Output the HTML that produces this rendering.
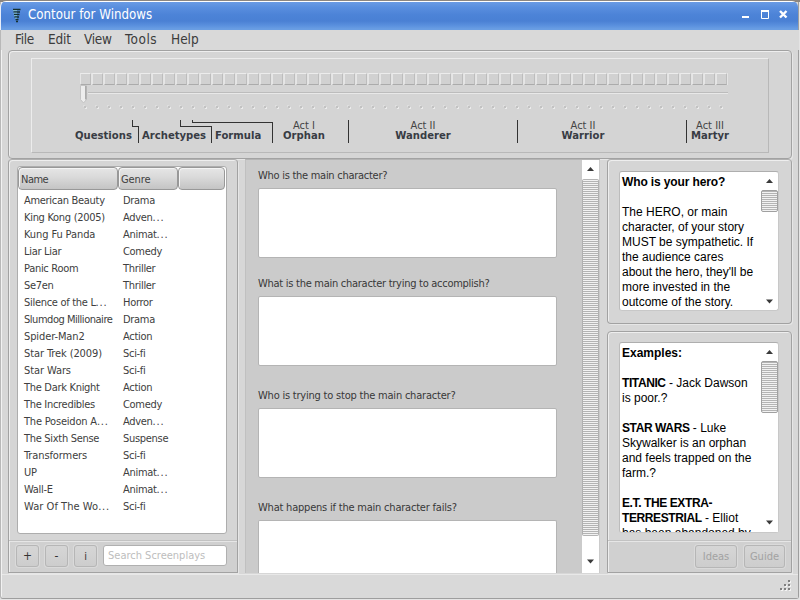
<!DOCTYPE html>
<html><head><meta charset="utf-8"><title>Contour for Windows</title>
<style>
*{box-sizing:border-box;margin:0;padding:0}
html,body{width:800px;height:600px;overflow:hidden;background:#d6d6d6}
body{position:relative;font-family:"DejaVu Sans Condensed","DejaVu Sans","Liberation Sans",sans-serif;font-size:11px;color:#3a3a3a}
div,span{position:absolute;white-space:nowrap}
#win{left:0;top:0;width:800px;height:600px;background:#e4e4e4}#win2{left:0;top:2px;width:799px;height:597px;background:#d7d7d7;border:1px solid #9e9e9e;border-left-color:#b8b8b8;border-top:none;border-radius:0 0 3px 3px;box-shadow:inset 1px 0 0 #f2f2f2}
#topline{left:0;top:0;width:800px;height:2px;background:#8c8680}
#title{left:0;top:1px;width:798px;height:29px;background:linear-gradient(#ffffff 0,#ffffff 1px,#6a9be4 1px,#5a8fdf 6px,#4c83d7 14px,#4a80d4 20px,#5c92df 25px,#6a9ee3 28px);border-radius:6px 6px 0 0;border-left:1px solid #e8eefa}
#title .t{left:27px;top:6px;font-size:13.2px;color:#fff;font-family:"DejaVu Sans Condensed","DejaVu Sans",sans-serif}
#menu{left:1px;top:30px;width:798px;height:20px;background:#d9d9d9}
#menu span{top:1px;font-size:13.5px;color:#3c3c3c;font-family:"DejaVu Sans Condensed","DejaVu Sans",sans-serif}
.gb{border:1px solid #a2a2a2;border-radius:4px;background:#d5d5d5;box-shadow:inset 1px 1px 0 #eeeeee,1px 1px 0 #e6e6e6}.gb.lo{border-top-color:#b0b0b0}
.lbl{font-size:11px;color:#3a3a3a}
.ta{background:#fff;border:1px solid #b4b4b4;border-radius:2px}
.q{left:258px;font-size:11px;color:#383838;letter-spacing:-0.27px}
.row span{font-size:11px;color:#404040;letter-spacing:-0.3px}.row u{text-decoration:none;letter-spacing:0.8px}
.btn{border:1px solid #b6b6b6;border-radius:3px;background:linear-gradient(#d6d6d6,#cdcdcd);text-align:center;color:#333;box-shadow:0 0 0 1px #dadada}
.hd{top:167px;height:23px;border:1px solid #989898;border-radius:4px;background:linear-gradient(#e6e6e6 0,#d9d9d9 45%,#c4c4c4 100%);box-shadow:inset 1px 1px 0 #f4f4f4}
.hd span{left:2px;top:5px;font-size:11px;color:#404040;letter-spacing:-0.5px}
.ar{font-family:"Liberation Sans",sans-serif;font-size:12px;color:#000;line-height:15px;white-space:normal}
.ar b{font-weight:bold}.ar b.u{letter-spacing:-0.4px}
.sb{background:repeating-linear-gradient(#b4b4b4 0,#b4b4b4 1px,#f2f2f2 1px,#f2f2f2 2px)}
</style></head><body>
<div id="win"></div><div id="win2"></div>
<div id="topline"></div>
<div id="title"><span class="t">Contour for Windows</span></div>
<svg style="position:absolute;left:12px;top:8px" width="10" height="15" viewBox="0 0 10 15"><path d="M1 1.500h7.500M1.500 4h6.500M2 6.500h5.500M2.500 9h4.500M3.500 11.500h3M4 13.500h2" stroke="#16302e" stroke-width="1.700" fill="none"/><path d="M1 2.600h4M1.500 5.100h3.500M2 7.600h3M3 10.100h2" stroke="#8fd0d4" stroke-width="0.800" fill="none"/></svg>
<svg style="position:absolute;left:740px;top:8px" width="50" height="12" viewBox="0 0 50 12"><g stroke="#fff" fill="none"><path d="M2 9h7" stroke-width="2"/><path d="M21.5 3v7.5h7v-7.5M21 3h8" stroke-width="1"/><path d="M21 3h8" stroke-width="2"/><path d="M40 3l6.5 6.5M46.500 3l-6.500 6.500" stroke-width="2.4"/></g></svg>
<div id="menu"><span style="left:14px;letter-spacing:-0.3px">File</span><span style="left:47px;letter-spacing:-0.2px">Edit</span><span style="left:83px;letter-spacing:-0.3px">View</span><span style="left:124px;letter-spacing:0.5px">Tools</span><span style="left:170px">Help</span></div>
<div class="gb" style="left:8px;top:50px;width:784px;height:109px"></div>
<div style="left:31px;top:58px;width:738px;height:95px;background:#d4d4d4;border:1px solid #ececec;border-right-color:#b8b8b8;border-bottom-color:#b8b8b8"></div>
<div style="left:80px;top:73px;width:648px;height:12px;background:#e4e4e4"><i style="position:absolute;left:0px;top:0;width:11px;height:12px;background:#d1d1d1;border-top:1px solid #ececec;border-left:1px solid #e6e6e6;border-bottom:1px solid #ababab;border-right:1px solid #bdbdbd"></i><i style="position:absolute;left:12px;top:0;width:11px;height:12px;background:#d1d1d1;border-top:1px solid #ececec;border-left:1px solid #e6e6e6;border-bottom:1px solid #ababab;border-right:1px solid #bdbdbd"></i><i style="position:absolute;left:24px;top:0;width:11px;height:12px;background:#d1d1d1;border-top:1px solid #ececec;border-left:1px solid #e6e6e6;border-bottom:1px solid #ababab;border-right:1px solid #bdbdbd"></i><i style="position:absolute;left:36px;top:0;width:11px;height:12px;background:#d1d1d1;border-top:1px solid #ececec;border-left:1px solid #e6e6e6;border-bottom:1px solid #ababab;border-right:1px solid #bdbdbd"></i><i style="position:absolute;left:48px;top:0;width:11px;height:12px;background:#d1d1d1;border-top:1px solid #ececec;border-left:1px solid #e6e6e6;border-bottom:1px solid #ababab;border-right:1px solid #bdbdbd"></i><i style="position:absolute;left:60px;top:0;width:11px;height:12px;background:#d1d1d1;border-top:1px solid #ececec;border-left:1px solid #e6e6e6;border-bottom:1px solid #ababab;border-right:1px solid #bdbdbd"></i><i style="position:absolute;left:72px;top:0;width:11px;height:12px;background:#d1d1d1;border-top:1px solid #ececec;border-left:1px solid #e6e6e6;border-bottom:1px solid #ababab;border-right:1px solid #bdbdbd"></i><i style="position:absolute;left:84px;top:0;width:11px;height:12px;background:#d1d1d1;border-top:1px solid #ececec;border-left:1px solid #e6e6e6;border-bottom:1px solid #ababab;border-right:1px solid #bdbdbd"></i><i style="position:absolute;left:96px;top:0;width:11px;height:12px;background:#d1d1d1;border-top:1px solid #ececec;border-left:1px solid #e6e6e6;border-bottom:1px solid #ababab;border-right:1px solid #bdbdbd"></i><i style="position:absolute;left:108px;top:0;width:11px;height:12px;background:#d1d1d1;border-top:1px solid #ececec;border-left:1px solid #e6e6e6;border-bottom:1px solid #ababab;border-right:1px solid #bdbdbd"></i><i style="position:absolute;left:120px;top:0;width:11px;height:12px;background:#d1d1d1;border-top:1px solid #ececec;border-left:1px solid #e6e6e6;border-bottom:1px solid #ababab;border-right:1px solid #bdbdbd"></i><i style="position:absolute;left:132px;top:0;width:11px;height:12px;background:#d1d1d1;border-top:1px solid #ececec;border-left:1px solid #e6e6e6;border-bottom:1px solid #ababab;border-right:1px solid #bdbdbd"></i><i style="position:absolute;left:144px;top:0;width:11px;height:12px;background:#d1d1d1;border-top:1px solid #ececec;border-left:1px solid #e6e6e6;border-bottom:1px solid #ababab;border-right:1px solid #bdbdbd"></i><i style="position:absolute;left:156px;top:0;width:11px;height:12px;background:#d1d1d1;border-top:1px solid #ececec;border-left:1px solid #e6e6e6;border-bottom:1px solid #ababab;border-right:1px solid #bdbdbd"></i><i style="position:absolute;left:168px;top:0;width:11px;height:12px;background:#d1d1d1;border-top:1px solid #ececec;border-left:1px solid #e6e6e6;border-bottom:1px solid #ababab;border-right:1px solid #bdbdbd"></i><i style="position:absolute;left:180px;top:0;width:11px;height:12px;background:#d1d1d1;border-top:1px solid #ececec;border-left:1px solid #e6e6e6;border-bottom:1px solid #ababab;border-right:1px solid #bdbdbd"></i><i style="position:absolute;left:192px;top:0;width:11px;height:12px;background:#d1d1d1;border-top:1px solid #ececec;border-left:1px solid #e6e6e6;border-bottom:1px solid #ababab;border-right:1px solid #bdbdbd"></i><i style="position:absolute;left:204px;top:0;width:11px;height:12px;background:#d1d1d1;border-top:1px solid #ececec;border-left:1px solid #e6e6e6;border-bottom:1px solid #ababab;border-right:1px solid #bdbdbd"></i><i style="position:absolute;left:216px;top:0;width:11px;height:12px;background:#d1d1d1;border-top:1px solid #ececec;border-left:1px solid #e6e6e6;border-bottom:1px solid #ababab;border-right:1px solid #bdbdbd"></i><i style="position:absolute;left:228px;top:0;width:11px;height:12px;background:#d1d1d1;border-top:1px solid #ececec;border-left:1px solid #e6e6e6;border-bottom:1px solid #ababab;border-right:1px solid #bdbdbd"></i><i style="position:absolute;left:240px;top:0;width:11px;height:12px;background:#d1d1d1;border-top:1px solid #ececec;border-left:1px solid #e6e6e6;border-bottom:1px solid #ababab;border-right:1px solid #bdbdbd"></i><i style="position:absolute;left:252px;top:0;width:11px;height:12px;background:#d1d1d1;border-top:1px solid #ececec;border-left:1px solid #e6e6e6;border-bottom:1px solid #ababab;border-right:1px solid #bdbdbd"></i><i style="position:absolute;left:264px;top:0;width:11px;height:12px;background:#d1d1d1;border-top:1px solid #ececec;border-left:1px solid #e6e6e6;border-bottom:1px solid #ababab;border-right:1px solid #bdbdbd"></i><i style="position:absolute;left:276px;top:0;width:11px;height:12px;background:#d1d1d1;border-top:1px solid #ececec;border-left:1px solid #e6e6e6;border-bottom:1px solid #ababab;border-right:1px solid #bdbdbd"></i><i style="position:absolute;left:288px;top:0;width:11px;height:12px;background:#d1d1d1;border-top:1px solid #ececec;border-left:1px solid #e6e6e6;border-bottom:1px solid #ababab;border-right:1px solid #bdbdbd"></i><i style="position:absolute;left:300px;top:0;width:11px;height:12px;background:#d1d1d1;border-top:1px solid #ececec;border-left:1px solid #e6e6e6;border-bottom:1px solid #ababab;border-right:1px solid #bdbdbd"></i><i style="position:absolute;left:312px;top:0;width:11px;height:12px;background:#d1d1d1;border-top:1px solid #ececec;border-left:1px solid #e6e6e6;border-bottom:1px solid #ababab;border-right:1px solid #bdbdbd"></i><i style="position:absolute;left:324px;top:0;width:11px;height:12px;background:#d1d1d1;border-top:1px solid #ececec;border-left:1px solid #e6e6e6;border-bottom:1px solid #ababab;border-right:1px solid #bdbdbd"></i><i style="position:absolute;left:336px;top:0;width:11px;height:12px;background:#d1d1d1;border-top:1px solid #ececec;border-left:1px solid #e6e6e6;border-bottom:1px solid #ababab;border-right:1px solid #bdbdbd"></i><i style="position:absolute;left:348px;top:0;width:11px;height:12px;background:#d1d1d1;border-top:1px solid #ececec;border-left:1px solid #e6e6e6;border-bottom:1px solid #ababab;border-right:1px solid #bdbdbd"></i><i style="position:absolute;left:360px;top:0;width:11px;height:12px;background:#d1d1d1;border-top:1px solid #ececec;border-left:1px solid #e6e6e6;border-bottom:1px solid #ababab;border-right:1px solid #bdbdbd"></i><i style="position:absolute;left:372px;top:0;width:11px;height:12px;background:#d1d1d1;border-top:1px solid #ececec;border-left:1px solid #e6e6e6;border-bottom:1px solid #ababab;border-right:1px solid #bdbdbd"></i><i style="position:absolute;left:384px;top:0;width:11px;height:12px;background:#d1d1d1;border-top:1px solid #ececec;border-left:1px solid #e6e6e6;border-bottom:1px solid #ababab;border-right:1px solid #bdbdbd"></i><i style="position:absolute;left:396px;top:0;width:11px;height:12px;background:#d1d1d1;border-top:1px solid #ececec;border-left:1px solid #e6e6e6;border-bottom:1px solid #ababab;border-right:1px solid #bdbdbd"></i><i style="position:absolute;left:408px;top:0;width:11px;height:12px;background:#d1d1d1;border-top:1px solid #ececec;border-left:1px solid #e6e6e6;border-bottom:1px solid #ababab;border-right:1px solid #bdbdbd"></i><i style="position:absolute;left:420px;top:0;width:11px;height:12px;background:#d1d1d1;border-top:1px solid #ececec;border-left:1px solid #e6e6e6;border-bottom:1px solid #ababab;border-right:1px solid #bdbdbd"></i><i style="position:absolute;left:432px;top:0;width:11px;height:12px;background:#d1d1d1;border-top:1px solid #ececec;border-left:1px solid #e6e6e6;border-bottom:1px solid #ababab;border-right:1px solid #bdbdbd"></i><i style="position:absolute;left:444px;top:0;width:11px;height:12px;background:#d1d1d1;border-top:1px solid #ececec;border-left:1px solid #e6e6e6;border-bottom:1px solid #ababab;border-right:1px solid #bdbdbd"></i><i style="position:absolute;left:456px;top:0;width:11px;height:12px;background:#d1d1d1;border-top:1px solid #ececec;border-left:1px solid #e6e6e6;border-bottom:1px solid #ababab;border-right:1px solid #bdbdbd"></i><i style="position:absolute;left:468px;top:0;width:11px;height:12px;background:#d1d1d1;border-top:1px solid #ececec;border-left:1px solid #e6e6e6;border-bottom:1px solid #ababab;border-right:1px solid #bdbdbd"></i><i style="position:absolute;left:480px;top:0;width:11px;height:12px;background:#d1d1d1;border-top:1px solid #ececec;border-left:1px solid #e6e6e6;border-bottom:1px solid #ababab;border-right:1px solid #bdbdbd"></i><i style="position:absolute;left:492px;top:0;width:11px;height:12px;background:#d1d1d1;border-top:1px solid #ececec;border-left:1px solid #e6e6e6;border-bottom:1px solid #ababab;border-right:1px solid #bdbdbd"></i><i style="position:absolute;left:504px;top:0;width:11px;height:12px;background:#d1d1d1;border-top:1px solid #ececec;border-left:1px solid #e6e6e6;border-bottom:1px solid #ababab;border-right:1px solid #bdbdbd"></i><i style="position:absolute;left:516px;top:0;width:11px;height:12px;background:#d1d1d1;border-top:1px solid #ececec;border-left:1px solid #e6e6e6;border-bottom:1px solid #ababab;border-right:1px solid #bdbdbd"></i><i style="position:absolute;left:528px;top:0;width:11px;height:12px;background:#d1d1d1;border-top:1px solid #ececec;border-left:1px solid #e6e6e6;border-bottom:1px solid #ababab;border-right:1px solid #bdbdbd"></i><i style="position:absolute;left:540px;top:0;width:11px;height:12px;background:#d1d1d1;border-top:1px solid #ececec;border-left:1px solid #e6e6e6;border-bottom:1px solid #ababab;border-right:1px solid #bdbdbd"></i><i style="position:absolute;left:552px;top:0;width:11px;height:12px;background:#d1d1d1;border-top:1px solid #ececec;border-left:1px solid #e6e6e6;border-bottom:1px solid #ababab;border-right:1px solid #bdbdbd"></i><i style="position:absolute;left:564px;top:0;width:11px;height:12px;background:#d1d1d1;border-top:1px solid #ececec;border-left:1px solid #e6e6e6;border-bottom:1px solid #ababab;border-right:1px solid #bdbdbd"></i><i style="position:absolute;left:576px;top:0;width:11px;height:12px;background:#d1d1d1;border-top:1px solid #ececec;border-left:1px solid #e6e6e6;border-bottom:1px solid #ababab;border-right:1px solid #bdbdbd"></i><i style="position:absolute;left:588px;top:0;width:11px;height:12px;background:#d1d1d1;border-top:1px solid #ececec;border-left:1px solid #e6e6e6;border-bottom:1px solid #ababab;border-right:1px solid #bdbdbd"></i><i style="position:absolute;left:600px;top:0;width:11px;height:12px;background:#d1d1d1;border-top:1px solid #ececec;border-left:1px solid #e6e6e6;border-bottom:1px solid #ababab;border-right:1px solid #bdbdbd"></i><i style="position:absolute;left:612px;top:0;width:11px;height:12px;background:#d1d1d1;border-top:1px solid #ececec;border-left:1px solid #e6e6e6;border-bottom:1px solid #ababab;border-right:1px solid #bdbdbd"></i><i style="position:absolute;left:624px;top:0;width:11px;height:12px;background:#d1d1d1;border-top:1px solid #ececec;border-left:1px solid #e6e6e6;border-bottom:1px solid #ababab;border-right:1px solid #bdbdbd"></i><i style="position:absolute;left:636px;top:0;width:11px;height:12px;background:#d1d1d1;border-top:1px solid #ececec;border-left:1px solid #e6e6e6;border-bottom:1px solid #ababab;border-right:1px solid #bdbdbd"></i></div>
<div style="left:88px;top:92px;width:640px;height:2px;border-top:1px solid #bcbcbc;border-bottom:1px solid #e8e8e8"></div>
<svg style="position:absolute;left:79px;top:85px" width="10" height="20" viewBox="0 0 10 20"><path d="M1.500 0.500h6v14l-3 3.500l-3-3.500z" fill="#ededed" stroke="#c4c4c4" stroke-width="1"/><path d="M6.800 1v13.500" stroke="#a4a4a4" stroke-width="1.400"/></svg>
<div style="left:84px;top:106px;width:648px;height:3px"><i style="position:absolute;left:0px;top:0;width:2px;height:2px;background:#c2c2c2;box-shadow:1px 1px 0 #ebebeb,-1px -1px 0 #dedede"></i><i style="position:absolute;left:12px;top:0;width:2px;height:2px;background:#c2c2c2;box-shadow:1px 1px 0 #ebebeb,-1px -1px 0 #dedede"></i><i style="position:absolute;left:24px;top:0;width:2px;height:2px;background:#c2c2c2;box-shadow:1px 1px 0 #ebebeb,-1px -1px 0 #dedede"></i><i style="position:absolute;left:36px;top:0;width:2px;height:2px;background:#c2c2c2;box-shadow:1px 1px 0 #ebebeb,-1px -1px 0 #dedede"></i><i style="position:absolute;left:48px;top:0;width:2px;height:2px;background:#c2c2c2;box-shadow:1px 1px 0 #ebebeb,-1px -1px 0 #dedede"></i><i style="position:absolute;left:60px;top:0;width:2px;height:2px;background:#c2c2c2;box-shadow:1px 1px 0 #ebebeb,-1px -1px 0 #dedede"></i><i style="position:absolute;left:72px;top:0;width:2px;height:2px;background:#c2c2c2;box-shadow:1px 1px 0 #ebebeb,-1px -1px 0 #dedede"></i><i style="position:absolute;left:84px;top:0;width:2px;height:2px;background:#c2c2c2;box-shadow:1px 1px 0 #ebebeb,-1px -1px 0 #dedede"></i><i style="position:absolute;left:96px;top:0;width:2px;height:2px;background:#c2c2c2;box-shadow:1px 1px 0 #ebebeb,-1px -1px 0 #dedede"></i><i style="position:absolute;left:108px;top:0;width:2px;height:2px;background:#c2c2c2;box-shadow:1px 1px 0 #ebebeb,-1px -1px 0 #dedede"></i><i style="position:absolute;left:120px;top:0;width:2px;height:2px;background:#c2c2c2;box-shadow:1px 1px 0 #ebebeb,-1px -1px 0 #dedede"></i><i style="position:absolute;left:132px;top:0;width:2px;height:2px;background:#c2c2c2;box-shadow:1px 1px 0 #ebebeb,-1px -1px 0 #dedede"></i><i style="position:absolute;left:144px;top:0;width:2px;height:2px;background:#c2c2c2;box-shadow:1px 1px 0 #ebebeb,-1px -1px 0 #dedede"></i><i style="position:absolute;left:156px;top:0;width:2px;height:2px;background:#c2c2c2;box-shadow:1px 1px 0 #ebebeb,-1px -1px 0 #dedede"></i><i style="position:absolute;left:168px;top:0;width:2px;height:2px;background:#c2c2c2;box-shadow:1px 1px 0 #ebebeb,-1px -1px 0 #dedede"></i><i style="position:absolute;left:180px;top:0;width:2px;height:2px;background:#c2c2c2;box-shadow:1px 1px 0 #ebebeb,-1px -1px 0 #dedede"></i><i style="position:absolute;left:192px;top:0;width:2px;height:2px;background:#c2c2c2;box-shadow:1px 1px 0 #ebebeb,-1px -1px 0 #dedede"></i><i style="position:absolute;left:204px;top:0;width:2px;height:2px;background:#c2c2c2;box-shadow:1px 1px 0 #ebebeb,-1px -1px 0 #dedede"></i><i style="position:absolute;left:216px;top:0;width:2px;height:2px;background:#c2c2c2;box-shadow:1px 1px 0 #ebebeb,-1px -1px 0 #dedede"></i><i style="position:absolute;left:228px;top:0;width:2px;height:2px;background:#c2c2c2;box-shadow:1px 1px 0 #ebebeb,-1px -1px 0 #dedede"></i><i style="position:absolute;left:240px;top:0;width:2px;height:2px;background:#c2c2c2;box-shadow:1px 1px 0 #ebebeb,-1px -1px 0 #dedede"></i><i style="position:absolute;left:252px;top:0;width:2px;height:2px;background:#c2c2c2;box-shadow:1px 1px 0 #ebebeb,-1px -1px 0 #dedede"></i><i style="position:absolute;left:264px;top:0;width:2px;height:2px;background:#c2c2c2;box-shadow:1px 1px 0 #ebebeb,-1px -1px 0 #dedede"></i><i style="position:absolute;left:276px;top:0;width:2px;height:2px;background:#c2c2c2;box-shadow:1px 1px 0 #ebebeb,-1px -1px 0 #dedede"></i><i style="position:absolute;left:288px;top:0;width:2px;height:2px;background:#c2c2c2;box-shadow:1px 1px 0 #ebebeb,-1px -1px 0 #dedede"></i><i style="position:absolute;left:300px;top:0;width:2px;height:2px;background:#c2c2c2;box-shadow:1px 1px 0 #ebebeb,-1px -1px 0 #dedede"></i><i style="position:absolute;left:312px;top:0;width:2px;height:2px;background:#c2c2c2;box-shadow:1px 1px 0 #ebebeb,-1px -1px 0 #dedede"></i><i style="position:absolute;left:324px;top:0;width:2px;height:2px;background:#c2c2c2;box-shadow:1px 1px 0 #ebebeb,-1px -1px 0 #dedede"></i><i style="position:absolute;left:336px;top:0;width:2px;height:2px;background:#c2c2c2;box-shadow:1px 1px 0 #ebebeb,-1px -1px 0 #dedede"></i><i style="position:absolute;left:348px;top:0;width:2px;height:2px;background:#c2c2c2;box-shadow:1px 1px 0 #ebebeb,-1px -1px 0 #dedede"></i><i style="position:absolute;left:360px;top:0;width:2px;height:2px;background:#c2c2c2;box-shadow:1px 1px 0 #ebebeb,-1px -1px 0 #dedede"></i><i style="position:absolute;left:372px;top:0;width:2px;height:2px;background:#c2c2c2;box-shadow:1px 1px 0 #ebebeb,-1px -1px 0 #dedede"></i><i style="position:absolute;left:384px;top:0;width:2px;height:2px;background:#c2c2c2;box-shadow:1px 1px 0 #ebebeb,-1px -1px 0 #dedede"></i><i style="position:absolute;left:396px;top:0;width:2px;height:2px;background:#c2c2c2;box-shadow:1px 1px 0 #ebebeb,-1px -1px 0 #dedede"></i><i style="position:absolute;left:408px;top:0;width:2px;height:2px;background:#c2c2c2;box-shadow:1px 1px 0 #ebebeb,-1px -1px 0 #dedede"></i><i style="position:absolute;left:420px;top:0;width:2px;height:2px;background:#c2c2c2;box-shadow:1px 1px 0 #ebebeb,-1px -1px 0 #dedede"></i><i style="position:absolute;left:432px;top:0;width:2px;height:2px;background:#c2c2c2;box-shadow:1px 1px 0 #ebebeb,-1px -1px 0 #dedede"></i><i style="position:absolute;left:444px;top:0;width:2px;height:2px;background:#c2c2c2;box-shadow:1px 1px 0 #ebebeb,-1px -1px 0 #dedede"></i><i style="position:absolute;left:456px;top:0;width:2px;height:2px;background:#c2c2c2;box-shadow:1px 1px 0 #ebebeb,-1px -1px 0 #dedede"></i><i style="position:absolute;left:468px;top:0;width:2px;height:2px;background:#c2c2c2;box-shadow:1px 1px 0 #ebebeb,-1px -1px 0 #dedede"></i><i style="position:absolute;left:480px;top:0;width:2px;height:2px;background:#c2c2c2;box-shadow:1px 1px 0 #ebebeb,-1px -1px 0 #dedede"></i><i style="position:absolute;left:492px;top:0;width:2px;height:2px;background:#c2c2c2;box-shadow:1px 1px 0 #ebebeb,-1px -1px 0 #dedede"></i><i style="position:absolute;left:504px;top:0;width:2px;height:2px;background:#c2c2c2;box-shadow:1px 1px 0 #ebebeb,-1px -1px 0 #dedede"></i><i style="position:absolute;left:516px;top:0;width:2px;height:2px;background:#c2c2c2;box-shadow:1px 1px 0 #ebebeb,-1px -1px 0 #dedede"></i><i style="position:absolute;left:528px;top:0;width:2px;height:2px;background:#c2c2c2;box-shadow:1px 1px 0 #ebebeb,-1px -1px 0 #dedede"></i><i style="position:absolute;left:540px;top:0;width:2px;height:2px;background:#c2c2c2;box-shadow:1px 1px 0 #ebebeb,-1px -1px 0 #dedede"></i><i style="position:absolute;left:552px;top:0;width:2px;height:2px;background:#c2c2c2;box-shadow:1px 1px 0 #ebebeb,-1px -1px 0 #dedede"></i><i style="position:absolute;left:564px;top:0;width:2px;height:2px;background:#c2c2c2;box-shadow:1px 1px 0 #ebebeb,-1px -1px 0 #dedede"></i><i style="position:absolute;left:576px;top:0;width:2px;height:2px;background:#c2c2c2;box-shadow:1px 1px 0 #ebebeb,-1px -1px 0 #dedede"></i><i style="position:absolute;left:588px;top:0;width:2px;height:2px;background:#c2c2c2;box-shadow:1px 1px 0 #ebebeb,-1px -1px 0 #dedede"></i><i style="position:absolute;left:600px;top:0;width:2px;height:2px;background:#c2c2c2;box-shadow:1px 1px 0 #ebebeb,-1px -1px 0 #dedede"></i><i style="position:absolute;left:612px;top:0;width:2px;height:2px;background:#c2c2c2;box-shadow:1px 1px 0 #ebebeb,-1px -1px 0 #dedede"></i><i style="position:absolute;left:624px;top:0;width:2px;height:2px;background:#c2c2c2;box-shadow:1px 1px 0 #ebebeb,-1px -1px 0 #dedede"></i><i style="position:absolute;left:636px;top:0;width:2px;height:2px;background:#c2c2c2;box-shadow:1px 1px 0 #ebebeb,-1px -1px 0 #dedede"></i></div>
<svg style="position:absolute;left:0;top:0" width="800" height="160" viewBox="0 0 800 160"><g stroke="#333" stroke-width="1" fill="none" shape-rendering="crispEdges"><path d="M132.5 120v6.5h6v16"/><path d="M180.5 120v6.5h31v16"/><path d="M192.5 120v2.5h80v20"/><path d="M348.5 120v23M517.5 120v23M686.5 120v23"/></g></svg>
<span style="left:75px;top:129px;font-weight:bold;font-family:'DejaVu Sans Condensed','DejaVu Sans',sans-serif;font-size:11.2px;color:#383c44">Questions</span>
<span style="left:142px;top:129px;font-weight:bold;font-family:'DejaVu Sans Condensed','DejaVu Sans',sans-serif;font-size:11.2px;color:#383c44">Archetypes</span>
<span style="left:215px;top:129px;font-weight:bold;font-family:'DejaVu Sans Condensed','DejaVu Sans',sans-serif;font-size:11.2px;color:#383c44">Formula</span>
<span style="left:244px;top:119px;width:120px;text-align:center;font-size:11px;color:#444">Act I</span>
<span style="left:244px;top:129px;width:120px;text-align:center;font-weight:bold;font-family:'DejaVu Sans Condensed','DejaVu Sans',sans-serif;font-size:11.2px;color:#383c44">Orphan</span>
<span style="left:363px;top:119px;width:120px;text-align:center;font-size:11px;color:#444">Act II</span>
<span style="left:363px;top:129px;width:120px;text-align:center;font-weight:bold;font-family:'DejaVu Sans Condensed','DejaVu Sans',sans-serif;font-size:11.2px;color:#383c44">Wanderer</span>
<span style="left:523px;top:119px;width:120px;text-align:center;font-size:11px;color:#444">Act II</span>
<span style="left:523px;top:129px;width:120px;text-align:center;font-weight:bold;font-family:'DejaVu Sans Condensed','DejaVu Sans',sans-serif;font-size:11.2px;color:#383c44">Warrior</span>
<span style="left:650px;top:119px;width:120px;text-align:center;font-size:11px;color:#444">Act III</span>
<span style="left:650px;top:129px;width:120px;text-align:center;font-weight:bold;font-family:'DejaVu Sans Condensed','DejaVu Sans',sans-serif;font-size:11.2px;color:#383c44">Martyr</span>
<div class="gb lo" style="left:8px;top:159px;width:230px;height:414px;border-radius:4px 4px 0 0"></div>
<div style="left:10px;top:541px;width:227px;height:31px;background:#d0d0d0;border-top:1px solid #e6e6e6"></div><div style="left:9px;top:540px;width:228px;height:1px;background:#c2c2c2"></div>
<div style="left:17px;top:166px;width:210px;height:368px;background:#fff;border:1px solid #adadad;border-radius:3px"></div>
<div class="hd" style="left:18px;width:100px"><span>Name</span></div>
<div class="hd" style="left:118px;width:60px"><span style="letter-spacing:-0.1px">Genre</span></div>
<div class="hd" style="left:178px;width:47px"></div>
<div class="row" style="left:18px;top:194px;width:208px;height:17px"><span style="left:6px;top:0">American Beauty</span><span style="left:105px;top:0">Drama</span></div>
<div class="row" style="left:18px;top:211px;width:208px;height:17px"><span style="left:6px;top:0">King Kong (2005)</span><span style="left:105px;top:0">Adven<u>...</u></span></div>
<div class="row" style="left:18px;top:228px;width:208px;height:17px"><span style="left:6px;top:0;letter-spacing:-0.1px">Kung Fu Panda</span><span style="left:105px;top:0">Animat<u>...</u></span></div>
<div class="row" style="left:18px;top:245px;width:208px;height:17px"><span style="left:6px;top:0">Liar Liar</span><span style="left:105px;top:0">Comedy</span></div>
<div class="row" style="left:18px;top:262px;width:208px;height:17px"><span style="left:6px;top:0">Panic Room</span><span style="left:105px;top:0">Thriller</span></div>
<div class="row" style="left:18px;top:279px;width:208px;height:17px"><span style="left:6px;top:0">Se7en</span><span style="left:105px;top:0">Thriller</span></div>
<div class="row" style="left:18px;top:296px;width:208px;height:17px"><span style="left:6px;top:0">Silence of the L<u>...</u></span><span style="left:105px;top:0">Horror</span></div>
<div class="row" style="left:18px;top:313px;width:208px;height:17px"><span style="left:6px;top:0;letter-spacing:-0.47px">Slumdog Millionaire</span><span style="left:105px;top:0">Drama</span></div>
<div class="row" style="left:18px;top:330px;width:208px;height:17px"><span style="left:6px;top:0;letter-spacing:-0.1px">Spider-Man2</span><span style="left:105px;top:0">Action</span></div>
<div class="row" style="left:18px;top:347px;width:208px;height:17px"><span style="left:6px;top:0;letter-spacing:-0.1px">Star Trek (2009)</span><span style="left:105px;top:0">Sci-fi</span></div>
<div class="row" style="left:18px;top:364px;width:208px;height:17px"><span style="left:6px;top:0;letter-spacing:-0.1px">Star Wars</span><span style="left:105px;top:0">Sci-fi</span></div>
<div class="row" style="left:18px;top:381px;width:208px;height:17px"><span style="left:6px;top:0">The Dark Knight</span><span style="left:105px;top:0">Action</span></div>
<div class="row" style="left:18px;top:398px;width:208px;height:17px"><span style="left:6px;top:0">The Incredibles</span><span style="left:105px;top:0">Comedy</span></div>
<div class="row" style="left:18px;top:415px;width:208px;height:17px"><span style="left:6px;top:0;letter-spacing:-0.2px">The Poseidon A<u>...</u></span><span style="left:105px;top:0">Adven<u>...</u></span></div>
<div class="row" style="left:18px;top:432px;width:208px;height:17px"><span style="left:6px;top:0">The Sixth Sense</span><span style="left:105px;top:0">Suspense</span></div>
<div class="row" style="left:18px;top:449px;width:208px;height:17px"><span style="left:6px;top:0;letter-spacing:-0.1px">Transformers</span><span style="left:105px;top:0">Sci-fi</span></div>
<div class="row" style="left:18px;top:466px;width:208px;height:17px"><span style="left:6px;top:0">UP</span><span style="left:105px;top:0">Animat<u>...</u></span></div>
<div class="row" style="left:18px;top:483px;width:208px;height:17px"><span style="left:6px;top:0">Wall-E</span><span style="left:105px;top:0">Animat<u>...</u></span></div>
<div class="row" style="left:18px;top:500px;width:208px;height:17px"><span style="left:6px;top:0;letter-spacing:0.05px">War Of The Wo<u>...</u></span><span style="left:105px;top:0">Sci-fi</span></div>
<div class="btn" style="left:16px;top:545px;width:23px;height:22px;line-height:21px;font-size:12px">+</div>
<div class="btn" style="left:45px;top:545px;width:23px;height:22px;line-height:21px;font-size:12px">-</div>
<div class="btn" style="left:74px;top:545px;width:23px;height:22px;line-height:21px;font-size:11px">i</div>
<div style="left:103px;top:545px;width:124px;height:21px;background:#fff;border:1px solid #b0b0b0;border-radius:3px"><span style="left:4px;top:3px;color:#bdbdbd;font-size:11px">Search Screenplays</span></div>
<div style="left:245px;top:159px;width:355px;height:414px;background:#cbcbcb;border-left:1px solid #c0c0c0;border-top:1px solid #b4b4b4;overflow:hidden"></div>
<span class="q" style="top:169px">Who is the main character?</span>
<div class="ta" style="left:258px;top:188px;width:299px;height:70px"></div>
<span class="q" style="top:277px">What is the main character trying to accomplish?</span>
<div class="ta" style="left:258px;top:296px;width:299px;height:70px"></div>
<span class="q" style="top:389px;letter-spacing:-0.21px">Who is trying to stop the main character?</span>
<div class="ta" style="left:258px;top:408px;width:299px;height:70px"></div>
<span class="q" style="top:501px;letter-spacing:-0.21px">What happens if the main character fails?</span>
<div class="ta" style="left:258px;top:520px;width:299px;height:53px;border-bottom:none;border-radius:2px 2px 0 0"></div>
<div style="left:582px;top:160px;width:17px;height:413px;background:#fff"></div>
<div class="sb" style="left:582px;top:179px;width:17px;height:357px;border-left:1px solid #b0b0b0;border-right:1px solid #b0b0b0;border-radius:2px"></div>
<svg style="position:absolute;left:586px;top:166px" width="9" height="6"><path d="M1 5h7l-3.500-4z" fill="#3a3a3a"/></svg>
<svg style="position:absolute;left:586px;top:559px" width="9" height="6"><path d="M1 0.500h7l-3.500 4z" fill="#3a3a3a"/></svg>
<div class="gb lo" style="left:607px;top:159px;width:185px;height:165px"></div>
<div style="left:619px;top:171px;width:160px;height:140px;background:#fff;border:1px solid #c8c8c8;border-top-color:#aeaeae;border-left-color:#bcbcbc;border-radius:3px"></div>
<div class="ar" style="left:622px;top:175px;width:140px"><b style="letter-spacing:-0.13px">Who is your hero?</b><br><br>The HERO, or main<br>character, of your story<br>MUST be sympathetic. If<br>the audience cares<br>about the hero, they'll be<br>more invested in the<br>outcome of the story.</div>
<div class="sb" style="left:761px;top:190px;width:17px;height:22px;border:1px solid #a0a0a0;border-radius:2px"></div>
<svg style="position:absolute;left:765px;top:178px" width="9" height="6"><path d="M1 5h7l-3.500-4z" fill="#3a3a3a"/></svg>
<svg style="position:absolute;left:765px;top:299px" width="9" height="6"><path d="M1 0.500h7l-3.500 4z" fill="#3a3a3a"/></svg>
<div class="gb" style="left:607px;top:331px;width:185px;height:242px;border-radius:4px 4px 0 0"></div>
<div style="left:609px;top:541px;width:182px;height:31px;background:#d0d0d0;border-top:1px solid #e6e6e6"></div><div style="left:608px;top:540px;width:183px;height:1px;background:#c2c2c2"></div>
<div style="left:619px;top:342px;width:160px;height:191px;background:#fff;border:1px solid #c8c8c8;border-top-color:#aeaeae;border-left-color:#bcbcbc;border-radius:3px;overflow:hidden"><div class="ar" style="left:2px;top:3px;width:140px"><b>Examples:</b><br><br><b class="u">TITANIC</b> - Jack Dawson<br>is poor.?<br><br><b class="u">STAR WARS</b> - Luke<br>Skywalker is an orphan<br>and feels trapped on the<br>farm.?<br><br><b class="u">E.T. THE EXTRA-<br>TERRESTRIAL</b> - Elliot<br>has been abandoned by</div></div>
<div style="left:761px;top:515px;width:17px;height:17px;background:#fff"></div>
<div class="sb" style="left:761px;top:361px;width:17px;height:52px;border:1px solid #a0a0a0;border-radius:2px"></div>
<svg style="position:absolute;left:765px;top:349px" width="9" height="6"><path d="M1 5h7l-3.500-4z" fill="#3a3a3a"/></svg>
<svg style="position:absolute;left:765px;top:520px" width="9" height="6"><path d="M1 0.500h7l-3.500 4z" fill="#3a3a3a"/></svg>
<div class="btn" style="left:695px;top:545px;width:42px;height:23px;line-height:21px;color:#a2a2a2;font-size:11px">Ideas</div>
<div class="btn" style="left:744px;top:545px;width:41px;height:23px;line-height:21px;color:#a2a2a2;font-size:11px">Guide</div>
<div style="left:2px;top:574px;width:796px;height:24px;background:#d9d9d9;border-top:1px solid #e8e8e8"></div>
<div style="left:780px;top:580px;width:12px;height:12px"><i style="position:absolute;left:8px;top:0px;width:2px;height:2px;background:#808080;box-shadow:1px 1px 0 #f4f4f4"></i><i style="position:absolute;left:4px;top:4px;width:2px;height:2px;background:#808080;box-shadow:1px 1px 0 #f4f4f4"></i><i style="position:absolute;left:8px;top:4px;width:2px;height:2px;background:#808080;box-shadow:1px 1px 0 #f4f4f4"></i><i style="position:absolute;left:0px;top:8px;width:2px;height:2px;background:#808080;box-shadow:1px 1px 0 #f4f4f4"></i><i style="position:absolute;left:4px;top:8px;width:2px;height:2px;background:#808080;box-shadow:1px 1px 0 #f4f4f4"></i><i style="position:absolute;left:8px;top:8px;width:2px;height:2px;background:#808080;box-shadow:1px 1px 0 #f4f4f4"></i></div>
</body></html>
